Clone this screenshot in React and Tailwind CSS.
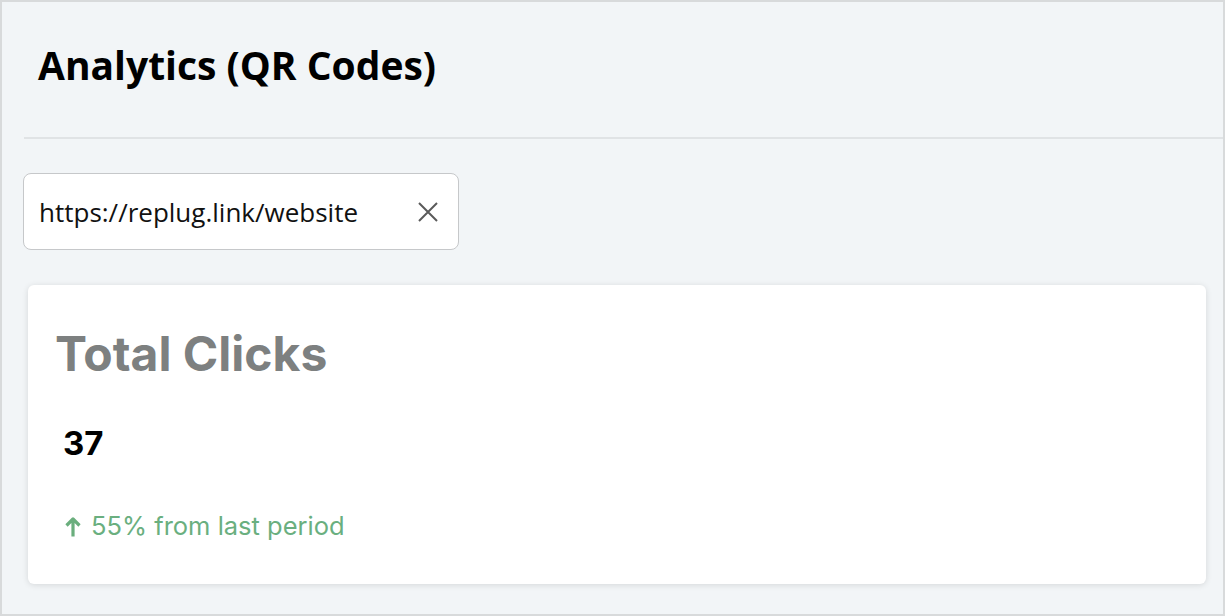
import React from 'react';

const CloseIcon = () => (
  <svg viewBox="0 0 20 20" className="h-[20px] w-[20px] text-[#5a5a5a]" fill="none" stroke="currentColor" strokeWidth={2}>
    <path d="M1 1l18 18M19 1L1 19" />
  </svg>
);

const ArrowUp = () => (
  <svg viewBox="0 0 16 20" className="h-[21px] w-[16px] shrink-0 text-[#6aae7d]" fill="none" stroke="currentColor" strokeWidth={3.2} strokeLinejoin="round">
    <path d="M8 20V3M1.5 9L8 2.5 14.5 9" />
  </svg>
);

const App = () => {
  return (
    <div className="h-[616px] w-[1225px] overflow-hidden border-2 border-[#d8dadb] bg-[#f2f5f7]">
      <div className="pl-[36px] pt-[38px] pb-[47px]">
        <h1 className="text-[39px] font-bold leading-[50px] text-black" style={{ fontFamily: '"Open Sans", sans-serif' }}>
          Analytics (QR Codes)
        </h1>
      </div>
      <div className="ml-[22px] h-[2px] bg-[#e0e3e5]" />

      <div className="px-[21px] pt-[34px]">
        <div className="flex h-[77px] w-[436px] items-center justify-between rounded-lg border border-[#c6c8ca] bg-white pl-[15px] pr-[20px]">
          <span className="text-[26px] leading-[34px] text-[#111]" style={{ fontFamily: '"Open Sans", sans-serif' }}>
            https://replug.link/website
          </span>
          <CloseIcon />
        </div>
      </div>

      <div className="pl-[26px] pr-[17px] pt-[35px]">
        <div className="h-[299px] rounded-md bg-white pl-[27px] pt-[39px] shadow-[0_1px_6px_rgba(0,0,0,0.12)]" style={{ fontFamily: 'Inter, sans-serif' }}>
          <h2 className="text-[48px] font-bold leading-[60px] text-[#7d8080]">Total Clicks</h2>
          <div className="mt-[39px] pl-[8px] text-[33px] font-bold leading-[40px] text-black">37</div>
          <div className="mt-[47px] flex items-center gap-[10px] pl-[10px] text-[25.5px] leading-[32px] text-[#6aaf7f]">
            <ArrowUp />
            <span>55% from last period</span>
          </div>
        </div>
      </div>
    </div>
  );
};

export default App;
